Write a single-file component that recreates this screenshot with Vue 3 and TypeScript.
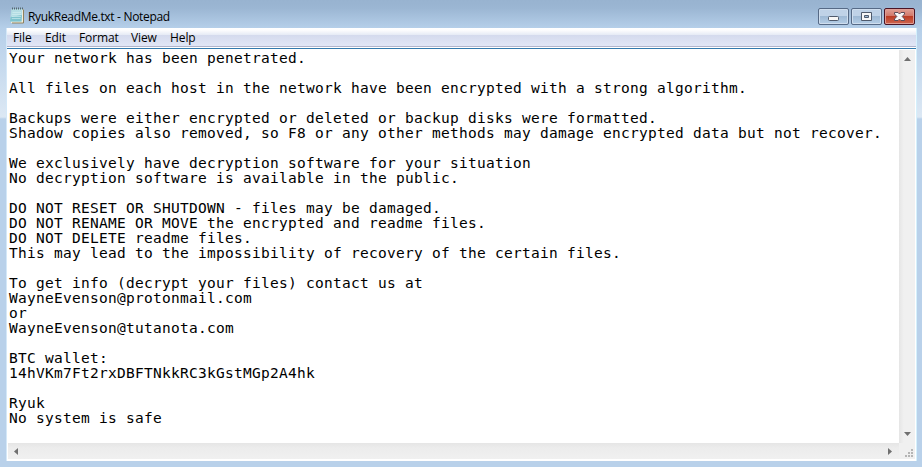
<script setup lang="ts">
const title: string = 'RyukReadMe.txt - Notepad'
const menus: string[] = ['File', 'Edit', 'Format', 'View', 'Help']
const note: string = [
  'Your network has been penetrated.',
  '',
  'All files on each host in the network have been encrypted with a strong algorithm.',
  '',
  'Backups were either encrypted or deleted or backup disks were formatted.',
  'Shadow copies also removed, so F8 or any other methods may damage encrypted data but not recover.',
  '',
  'We exclusively have decryption software for your situation',
  'No decryption software is available in the public.',
  '',
  'DO NOT RESET OR SHUTDOWN - files may be damaged.',
  'DO NOT RENAME OR MOVE the encrypted and readme files.',
  'DO NOT DELETE readme files.',
  'This may lead to the impossibility of recovery of the certain files.',
  '',
  'To get info (decrypt your files) contact us at',
  'WayneEvenson@protonmail.com',
  'or',
  'WayneEvenson@tutanota.com',
  '',
  'BTC wallet:',
  '14hVKm7Ft2rxDBFTNkkRC3kGstMGp2A4hk',
  '',
  'Ryuk',
  'No system is safe',
].join('\n')
</script>

<template>
  <div class="window">
    <header class="titlebar">
      <svg class="app-icon" width="16" height="17" viewBox="0 0 16 17">
        <path d="M3 2H14.5V16H2Z" fill="#f4efdc" />
        <path d="M14.5 2.5V16H3" fill="none" stroke="#8e815e" />
        <path d="M2.5 2H13.5L12.5 14.5H1Z" fill="#b4dde4" />
        <path d="M1.6 10L13 8L12.5 14.5H1Z" fill="#7fc3ce" />
        <path d="M3.5 5.5H12M3.2 7.5H12M3 9.5H12M2.8 11.5H11.5" stroke="#d5f0f2" stroke-width=".6" />
        <path d="M3 1.5H14" stroke="#55686e" stroke-width="2" stroke-dasharray="1 1" />
      </svg>
      <span class="title">{{ title }}</span>
      <div class="controls">
        <button class="control" aria-label="Minimize">
          <svg width="29" height="15" viewBox="0 0 29 15">
            <rect x="9.5" y="7.5" width="10" height="4" rx="1" fill="#f7f7f7" stroke="#4f5a6c" />
          </svg>
        </button>
        <button class="control" aria-label="Maximize">
          <svg width="29" height="15" viewBox="0 0 29 15">
            <path d="M9.5 3.5H19.5V11.5H9.5ZM12.500 6.500V8.500H16.500V6.500Z" fill="#f7f7f7" fill-rule="evenodd" stroke="#4f5a6c" />
          </svg>
        </button>
        <button class="control close" aria-label="Close">
          <svg width="29" height="15" viewBox="0 0 29 15">
            <path d="M9.500 3.500H13L14.500 5L16 3.500H19.500V5L17.200 7.500L19.500 10V11.500H16L14.500 10L13 11.500H9.500V10L11.800 7.500L9.500 5Z" fill="#f7f7f7" stroke="#5b4c58" />
          </svg>
        </button>
      </div>
    </header>
    <main class="client">
      <nav class="menubar">
        <span v-for="menu in menus" :key="menu" class="menu" :class="menu.toLowerCase()">{{ menu }}</span>
      </nav>
      <div class="editor">
        <pre class="note">{{ note }}</pre>
        <div class="scroll vertical">
          <svg width="7" height="4" viewBox="0 0 7 4"><path d="M0 4L3.500 0L7 4Z" fill="#707070" /></svg>
          <svg width="7" height="4" viewBox="0 0 7 4"><path d="M0 0L3.500 4L7 0Z" fill="#707070" /></svg>
        </div>
        <div class="scroll horizontal">
          <svg width="4" height="7" viewBox="0 0 4 7"><path d="M4 0L0 3.500L4 7Z" fill="#707070" /></svg>
          <svg width="4" height="7" viewBox="0 0 4 7"><path d="M0 0L4 3.500L0 7Z" fill="#707070" /></svg>
        </div>
        <div class="corner">
          <svg width="8" height="8" viewBox="0 0 8 8">
            <path d="M6 0h2v2h-2zM3 3h2v2h-2zM6 3h2v2h-2zM0 6h2v2h-2zM3 6h2v2h-2zM6 6h2v2h-2z" fill="#b5b5b5" />
          </svg>
        </div>
      </div>
    </main>
  </div>
</template>

<style>
body {
  margin: 0;
  overflow: hidden;
}
</style>

<style scoped>
.window {
  box-sizing: border-box;
  width: 922px;
  height: 467px;
  padding: 0 5px 6px 6px;
  display: flex;
  flex-direction: column;
  background: linear-gradient(#98b3d0 0, #9bb6d3 8px, #b5cfe9 28px, #bfd5ec 50px, #dce8f4 117px, #b9d1ea 119px);
  font-family: "Open Sans", "Noto Sans", sans-serif;
  font-size: 12px;
  color: #000;
}
.titlebar {
  height: 28px;
  display: flex;
  align-items: flex-start;
}
.app-icon {
  margin: 7px 0 0 3px;
}
.title {
  margin: 9px 0 0 3px;
  line-height: 16px;
  letter-spacing: -0.32px;
  white-space: nowrap;
}
.controls {
  display: flex;
  gap: 2px;
  margin: 8px 2px 0 auto;
}
.control {
  box-sizing: border-box;
  width: 31px;
  height: 17px;
  padding: 0;
  display: flex;
  border: 1px solid #566a86;
  border-radius: 2px;
  background: linear-gradient(#bfd2e7 0 45%, #9cb7d3 45%, #b5cee6);
  box-shadow: inset 0 0 0 1px #cfdeee;
}
.close {
  border-color: #4a1425;
  background: linear-gradient(#e0a095 0, #d2796b 45%, #b93820 45%, #cf6650);
  box-shadow: inset 0 0 0 1px #df9d94;
}
.client {
  flex: 1;
  min-height: 0;
  display: flex;
  flex-direction: column;
  border-left: 1px solid #d4e8f8;
  border-right: 1px solid #d4f0fc;
  background: #fff;
}
.menubar {
  box-sizing: border-box;
  height: 19px;
  flex: none;
  display: flex;
  padding-left: 6px;
  line-height: 20px;
  letter-spacing: -0.1px;
  background: linear-gradient(#fff 0, #fdfdfe 2px, #e5eaf5 7px, #d4daed 7px, #e1e6f6 18px, #b0b4cb 18px);
}
.menu {
  white-space: nowrap;
}
.file { width: 32px; }
.edit { width: 34px; }
.format { width: 52px; }
.view { width: 39px; }
.editor {
  flex: 1;
  min-height: 0;
  margin-top: 1px;
  border-top: 1px solid #3279ad;
  padding: 1px 1px 2px;
  display: grid;
  grid-template: minmax(0, 1fr) 16px / minmax(0, 1fr) 16px;
}
.note {
  margin: 0;
  padding: 1px 0 0 1px;
  overflow: hidden;
  font: 14.5px/15px "DejaVu Sans Mono", "Liberation Mono", monospace;
  letter-spacing: 0.27px;
}
.scroll {
  box-sizing: border-box;
  display: flex;
  align-items: center;
  justify-content: space-between;
}
.vertical {
  flex-direction: column;
  padding: 7px 0;
  background: linear-gradient(90deg, #e5e5e5, #f0f0f0 30%, #f0f0f0);
}
.horizontal {
  padding: 0 7px 0 6px;
  background: linear-gradient(#e5e5e5, #ececec 30%, #f0f0f0);
}
.corner {
  display: flex;
  align-items: flex-end;
  justify-content: flex-end;
  padding: 0 2px 2px 0;
  background: #f0f0f0;
}
</style>
